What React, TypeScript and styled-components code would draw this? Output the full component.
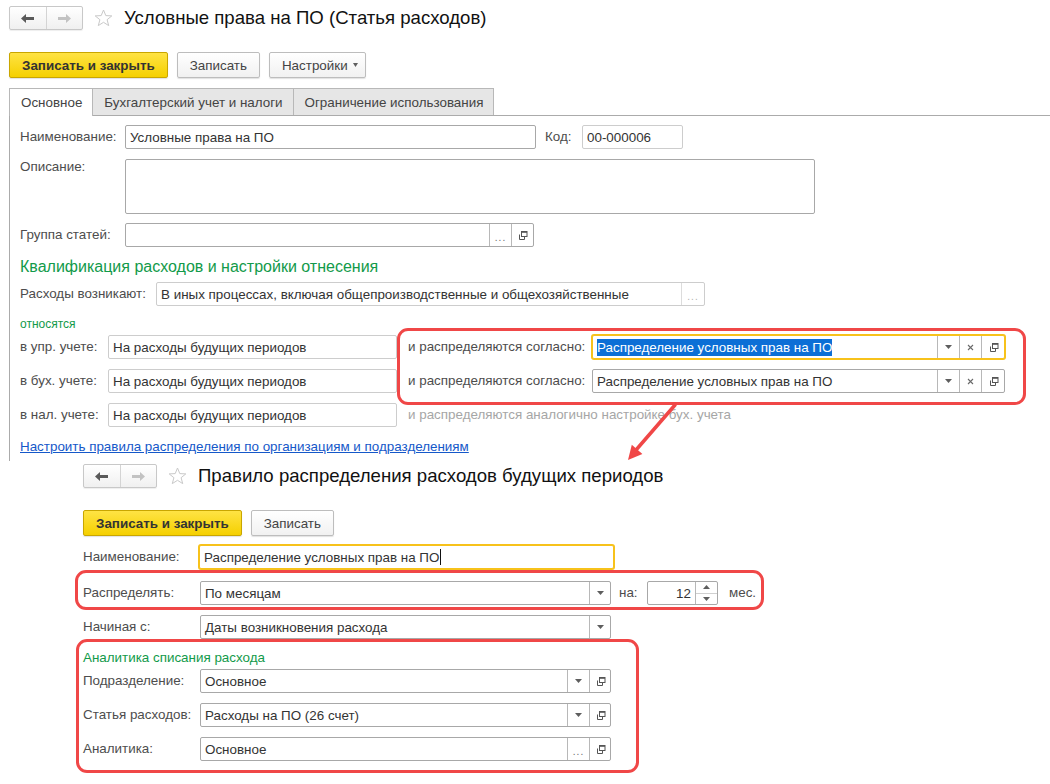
import styled, { createGlobalStyle, css } from "styled-components";

const GlobalStyle = createGlobalStyle`
  html, body {
    margin: 0;
    padding: 0;
    background: #fff;
  }
  body {
    font-family: "Liberation Sans", Arial, sans-serif;
    font-size: 13.4px;
    color: #4d4d4d;
  }
`;

const RED = "#f04747";
const GREEN = "#129a4a";

const Page = styled.div`
  position: relative;
  width: 1050px;
  height: 784px;
  overflow: hidden;
  padding-top: 6px;
  box-sizing: border-box;
`;

const Form = styled.section<{ $left: number; $mt?: number }>`
  padding-left: ${p => p.$left}px;
  margin-top: ${p => p.$mt ?? 0}px;
`;

const Header = styled.div`
  display: flex;
  align-items: center;
  height: 24px;
`;

const NavGroup = styled.div`
  display: flex;
  width: 74px;
  height: 24px;
  box-sizing: border-box;
  border: 1px solid #c8c8c8;
  border-radius: 2px;
  background: linear-gradient(#ffffff, #f0f0f0);
  box-shadow: 0 1px 1px rgba(0, 0, 0, 0.07);
`;

const NavButton = styled.div<{ $disabled?: boolean }>`
  flex: 1;
  display: flex;
  align-items: center;
  justify-content: center;
  color: ${p => (p.$disabled ? "#c2c2c2" : "#5a5a5a")};
  & + & {
    border-left: 1px solid #d4d4d4;
  }
`;

const StarBox = styled.span`
  display: flex;
  margin-left: 11px;
`;

const Title = styled.h1`
  margin: 0 0 0 11px;
  font-size: 18.6px;
  font-weight: normal;
  line-height: 24px;
  color: #111;
  white-space: nowrap;
`;

const Toolbar = styled.div`
  display: flex;
  gap: 9px;
  margin-top: 22px;
`;

const Button = styled.button<{ $primary?: boolean; $menu?: boolean }>`
  height: 26px;
  padding: ${p => (p.$menu ? "0 7px 0 12px" : "0 12px")};
  display: flex;
  align-items: center;
  gap: 5px;
  font: inherit;
  border-radius: 2px;
  cursor: default;
  box-shadow: 0 1px 1px rgba(0, 0, 0, 0.12);
  ${p =>
    p.$primary
      ? css`
          font-weight: bold;
          color: #333;
          border: 1px solid #c9a600;
          background: linear-gradient(#ffe344, #f5d000);
        `
      : css`
          color: #444;
          border: 1px solid #bdbdbd;
          background: linear-gradient(#ffffff, #f1f1f1);
        `}
`;

const Tabs = styled.div`
  display: flex;
  align-items: flex-start;
  height: 27px;
  margin-top: 10px;
  border-bottom: 1px solid #ababab;
`;

const Tab = styled.div<{ $active?: boolean }>`
  display: flex;
  align-items: center;
  height: ${p => (p.$active ? 28 : 27)}px;
  box-sizing: border-box;
  padding: 0 10px 0 11px;
  border: 1px solid #b8b8b8;
  border-bottom: none;
  color: #444;
  background: ${p => (p.$active ? "#fff" : "#e6e6e6")};
  & + & {
    border-left: none;
  }
`;

const Panel = styled.div`
  display: flex;
  flex-direction: column;
  border-left: 1px solid #ababab;
  padding: 9px 0 6px 10px;
`;

const Body = styled.div`
  display: flex;
  flex-direction: column;
`;

const Row = styled.div<{ $mt?: number; $top?: boolean }>`
  display: flex;
  align-items: ${p => (p.$top ? "flex-start" : "center")};
  margin-top: ${p => p.$mt ?? 0}px;
`;

const NoteRow = styled(Row)`
  height: 24px;
`;

const Label = styled.div<{ $w?: number; $ml?: number; $muted?: boolean }>`
  flex: none;
  ${p => (p.$w ? `width: ${p.$w}px;` : "")}
  margin-left: ${p => p.$ml ?? 0}px;
  line-height: 16px;
  white-space: nowrap;
  color: ${p => (p.$muted ? "#a6a6a6" : "#4d4d4d")};
`;

const Field = styled.div<{ $w: number; $h?: number; $light?: boolean; $focus?: boolean }>`
  flex: none;
  display: flex;
  width: ${p => p.$w}px;
  height: ${p => p.$h ?? 24}px;
  box-sizing: border-box;
  border: 1px solid ${p => (p.$light ? "#cdcdcd" : "#a8a8a8")};
  border-radius: 2px;
  background: #fff;
  ${p =>
    p.$focus &&
    css`
      border-color: #f7c21b;
      box-shadow: 0 0 0 1px #f7c21b;
    `}
`;

const Value = styled.div<{ $right?: boolean }>`
  flex: 1;
  display: flex;
  align-items: center;
  justify-content: ${p => (p.$right ? "flex-end" : "flex-start")};
  padding: 0 4px;
  overflow: hidden;
  white-space: nowrap;
  color: #333;
`;

const Selected = styled.span`
  background: #0c6fd6;
  color: #fff;
  line-height: 17px;
`;

const Caret = styled.span`
  display: inline-block;
  width: 1px;
  height: 16px;
  margin-left: 1px;
  background: #111;
`;

const FieldButton = styled.div<{ $w?: number; $dim?: boolean }>`
  flex: none;
  width: ${p => p.$w ?? 21}px;
  display: flex;
  align-items: center;
  justify-content: center;
  border-left: 1px solid ${p => (p.$dim ? "#dcdcdc" : "#b8b8b8")};
  color: ${p => (p.$dim ? "#b0b0b0" : "#6a6a6a")};
`;

const Dots = styled.span`
  font-size: 10px;
  line-height: 10px;
  letter-spacing: 1px;
  padding-top: 6px;
`;

const Spin = styled.div`
  flex: none;
  width: 21px;
  display: flex;
  flex-direction: column;
  border-left: 1px solid #b8b8b8;
`;

const SpinHalf = styled.div`
  flex: 1;
  display: flex;
  align-items: center;
  justify-content: center;
  & + & {
    border-top: 1px solid #d0d0d0;
  }
`;

const SectionTitle = styled.div<{ $size: number; $mt?: number }>`
  margin-top: ${p => p.$mt ?? 0}px;
  font-size: ${p => p.$size}px;
  line-height: ${p => Math.round(p.$size) + 4}px;
  color: ${GREEN};
  white-space: nowrap;
`;

const Split = styled.div`
  display: flex;
  margin-top: 3px;
`;

const Column = styled.div<{ $ml?: number }>`
  display: flex;
  flex-direction: column;
  gap: 10px;
  margin-left: ${p => p.$ml ?? 0}px;
`;

const Marked = styled.div<{ $t: number; $r: number; $b: number; $l: number; $mt?: number }>`
  position: relative;
  display: flex;
  flex-direction: column;
  width: fit-content;
  margin-top: ${p => p.$mt ?? 0}px;
  &::after {
    content: "";
    position: absolute;
    top: ${p => -p.$t}px;
    right: ${p => -p.$r}px;
    bottom: ${p => -p.$b}px;
    left: ${p => -p.$l}px;
    border: 3px solid ${RED};
    border-radius: 11px;
    pointer-events: none;
  }
`;

const Link = styled.a`
  margin-top: 12px;
  line-height: 16px;
  color: #1558c9;
  text-decoration: underline;
  white-space: nowrap;
`;

const ArrowLayer = styled.svg`
  position: absolute;
  left: 620px;
  top: 400px;
  overflow: visible;
`;

const ArrowLeft = () => (
  <svg width="13" height="9" viewBox="0 0 13 9">
    <polygon points="0,4.5 5,0 5,3 13,3 13,6 5,6 5,9" fill="currentColor" />
  </svg>
);

const ArrowRight = () => (
  <svg width="13" height="9" viewBox="0 0 13 9">
    <polygon points="13,4.5 8,0 8,3 0,3 0,6 8,6 8,9" fill="currentColor" />
  </svg>
);

const Star = () => (
  <StarBox>
    <svg width="19" height="18" viewBox="0 0 19 18">
      <polygon
        points="9.5,1 11.8,6.6 17.8,6.9 13.1,10.7 14.7,16.6 9.5,13.3 4.3,16.6 5.9,10.7 1.2,6.9 7.2,6.6"
        fill="none"
        stroke="#c9c9c9"
        strokeWidth="1"
        strokeLinejoin="round"
      />
    </svg>
  </StarBox>
);

const Down = ({ w = 7 }: { w?: number }) => (
  <svg width={w} height="4" viewBox="0 0 7 4" preserveAspectRatio="none">
    <polygon points="0,0 7,0 3.5,4" fill="#5e5e5e" />
  </svg>
);

const Up = () => (
  <svg width="7" height="4" viewBox="0 0 7 4">
    <polygon points="0,4 7,4 3.5,0" fill="#5e5e5e" />
  </svg>
);

const Cross = () => (
  <svg width="7" height="7" viewBox="0 0 7 7">
    <path d="M1 1 L6 6 M6 1 L1 6" stroke="#6a6a6a" strokeWidth="1.1" />
  </svg>
);

const Copy = () => (
  <svg width="11" height="11" viewBox="0 0 11 11">
    <rect x="4.5" y="1.5" width="5.5" height="5" fill="none" stroke="#555" strokeWidth="1" />
    <line x1="4.5" y1="2" x2="10" y2="2" stroke="#555" strokeWidth="1.6" />
    <path d="M2.5 4.5 V9.5 H7.5 V7" fill="none" stroke="#555" strokeWidth="1" />
  </svg>
);

const NavHeader = ({ title }: { title: string }) => (
  <Header>
    <NavGroup>
      <NavButton>
        <ArrowLeft />
      </NavButton>
      <NavButton $disabled>
        <ArrowRight />
      </NavButton>
    </NavGroup>
    <Star />
    <Title>{title}</Title>
  </Header>
);

const ArticleForm = () => (
  <Form $left={9}>
    <NavHeader title="Условные права на ПО (Статья расходов)" />
    <Toolbar>
      <Button $primary>Записать и закрыть</Button>
      <Button>Записать</Button>
      <Button $menu>
        Настройки
        <Down w={5} />
      </Button>
    </Toolbar>
    <Tabs>
      <Tab $active>Основное</Tab>
      <Tab>Бухгалтерский учет и налоги</Tab>
      <Tab>Ограничение использования</Tab>
    </Tabs>
    <Panel>
      <Row>
        <Label $w={105}>Наименование:</Label>
        <Field $w={411}>
          <Value>Условные права на ПО</Value>
        </Field>
        <Label $w={37} $ml={9}>Код:</Label>
        <Field $w={101} $light>
          <Value>00-000006</Value>
        </Field>
      </Row>
      <Row $mt={10} $top>
        <Label $w={105}>Описание:</Label>
        <Field $w={690} $h={55} />
      </Row>
      <Row $mt={9}>
        <Label $w={105}>Группа статей:</Label>
        <Field $w={409}>
          <Value />
          <FieldButton>
            <Dots>...</Dots>
          </FieldButton>
          <FieldButton>
            <Copy />
          </FieldButton>
        </Field>
      </Row>
      <SectionTitle $size={16} $mt={10}>
        Квалификация расходов и настройки отнесения
      </SectionTitle>
      <Row $mt={5}>
        <Label $w={136}>Расходы возникают:</Label>
        <Field $w={549} $light>
          <Value>В иных процессах, включая общепроизводственные и общехозяйственные</Value>
          <FieldButton $w={22} $dim>
            <Dots>...</Dots>
          </FieldButton>
        </Field>
      </Row>
      <SectionTitle $size={12} $mt={10}>
        относятся
      </SectionTitle>
      <Split>
        <Column>
          {["в упр. учете:", "в бух. учете:", "в нал. учете:"].map(label => (
            <Row key={label}>
              <Label $w={88}>{label}</Label>
              <Field $w={289} $light>
                <Value>На расходы будущих периодов</Value>
              </Field>
            </Row>
          ))}
        </Column>
        <Column $ml={11}>
          <Marked $t={7} $r={21} $b={12} $l={11}>
            <Row>
              <Label $w={184}>и распределяются согласно:</Label>
              <Field $w={413} $focus>
                <Value>
                  <Selected>Распределение условных прав на ПО</Selected>
                </Value>
                <FieldButton>
                  <Down />
                </FieldButton>
                <FieldButton>
                  <Cross />
                </FieldButton>
                <FieldButton $w={22}>
                  <Copy />
                </FieldButton>
              </Field>
            </Row>
            <Row $mt={10}>
              <Label $w={184}>и распределяются согласно:</Label>
              <Field $w={413}>
                <Value>Распределение условных прав на ПО</Value>
                <FieldButton>
                  <Down />
                </FieldButton>
                <FieldButton>
                  <Cross />
                </FieldButton>
                <FieldButton $w={22}>
                  <Copy />
                </FieldButton>
              </Field>
            </Row>
          </Marked>
          <NoteRow>
            <Label $muted>и распределяются аналогично настройке бух. учета</Label>
          </NoteRow>
        </Column>
      </Split>
      <Link>Настроить правила распределения по организациям и подразделениям</Link>
    </Panel>
  </Form>
);

const RuleForm = () => (
  <Form $left={83} $mt={3}>
    <NavHeader title="Правило распределения расходов будущих периодов" />
    <Toolbar>
      <Button $primary>Записать и закрыть</Button>
      <Button>Записать</Button>
    </Toolbar>
    <Body>
      <Row $mt={9}>
        <Label $w={116}>Наименование:</Label>
        <Field $w={415} $focus>
          <Value>
            Распределение условных прав на ПО
            <Caret />
          </Value>
        </Field>
      </Row>
      <Marked $t={11} $r={8} $b={5} $l={8} $mt={12}>
        <Row>
          <Label $w={117}>Распределять:</Label>
          <Field $w={411}>
            <Value>По месяцам</Value>
            <FieldButton $w={20}>
              <Down />
            </FieldButton>
          </Field>
          <Label $w={28} $ml={8}>на:</Label>
          <Field $w={71}>
            <Value $right>12</Value>
            <Spin>
              <SpinHalf>
                <Up />
              </SpinHalf>
              <SpinHalf>
                <Down />
              </SpinHalf>
            </Spin>
          </Field>
          <Label $ml={11}>мес.</Label>
        </Row>
      </Marked>
      <Row $mt={10}>
        <Label $w={117}>Начиная с:</Label>
        <Field $w={411}>
          <Value>Даты возникновения расхода</Value>
          <FieldButton $w={20}>
            <Down />
          </FieldButton>
        </Field>
      </Row>
      <Marked $t={10} $r={28} $b={12} $l={7} $mt={10}>
        <SectionTitle $size={13.4}>Аналитика списания расхода</SectionTitle>
        <Row $mt={3}>
          <Label $w={117}>Подразделение:</Label>
          <Field $w={411}>
            <Value>Основное</Value>
            <FieldButton>
              <Down />
            </FieldButton>
            <FieldButton $w={20}>
              <Copy />
            </FieldButton>
          </Field>
        </Row>
        <Row $mt={10}>
          <Label $w={117}>Статья расходов:</Label>
          <Field $w={411}>
            <Value>Расходы на ПО (26 счет)</Value>
            <FieldButton>
              <Down />
            </FieldButton>
            <FieldButton $w={20}>
              <Copy />
            </FieldButton>
          </Field>
        </Row>
        <Row $mt={10}>
          <Label $w={117}>Аналитика:</Label>
          <Field $w={411}>
            <Value>Основное</Value>
            <FieldButton>
              <Dots>...</Dots>
            </FieldButton>
            <FieldButton $w={20}>
              <Copy />
            </FieldButton>
          </Field>
        </Row>
      </Marked>
    </Body>
  </Form>
);

export default function App() {
  return (
    <Page>
      <GlobalStyle />
      <ArticleForm />
      <RuleForm />
      <ArrowLayer width="60" height="64" viewBox="0 0 60 64">
        <line x1="55" y1="5" x2="16" y2="50" stroke={RED} strokeWidth="3.5" strokeLinecap="round" />
        <polygon points="8,60 22.4,54 11.8,44.8" fill={RED} />
      </ArrowLayer>
    </Page>
  );
}
